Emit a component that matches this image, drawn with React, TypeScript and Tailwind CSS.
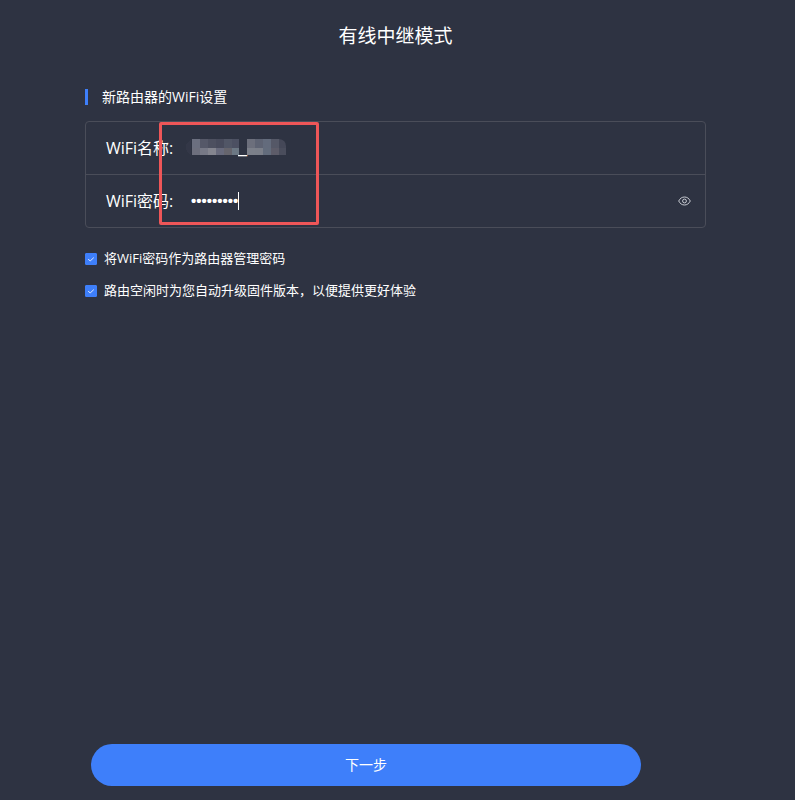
import { useState } from "react";

const CENSOR_TOP = ["#6b6f7f", "#555868", "#4d5060", "#484b5c", "#515666", "#4c5062"];
const CENSOR_BOTTOM = ["#6d6f7d", "#777986", "#84858f", "#686a7c", "#66656d", "#6c7884"];
const CENSOR_TOP_2 = ["#6c6f7c", "#5e6373", "#636b7c", "#555867", "#454858"];
const CENSOR_BOTTOM_2 = ["#7c808a", "#7b7f89", "#636c7c", "#5d5c69", "#4a4d5c"];

function Mosaic() {
  return (
    <svg
      className="pointer-events-none absolute top-[17px] left-0"
      width="106"
      height="18"
      viewBox="0 0 106 18"
      shapeRendering="crispEdges"
      aria-hidden="true"
    >
      <defs>
        <clipPath id="censor-edge">
          <path d="M0 0H94Q101 1 101 7V16H0Z" />
        </clipPath>
      </defs>
      <path d="M6 1Q1 3 1 8Q1 14 6 16Z" fill="#333747" />
      <g clipPath="url(#censor-edge)">
        {CENSOR_TOP.map((c, i) => (
          <rect key={i} x={7 + i * 8} y="0" width={i === 5 ? 7 : 8} height="9" fill={c} />
        ))}
        {CENSOR_BOTTOM.map((c, i) => (
          <rect key={i} x={7 + i * 8} y="9" width={i === 5 ? 7 : 8} height="7" fill={c} />
        ))}
        {CENSOR_TOP_2.map((c, i) => (
          <rect key={i} x={62 + i * 8} y="0" width="8" height="9" fill={c} />
        ))}
        {CENSOR_BOTTOM_2.map((c, i) => (
          <rect key={i} x={62 + i * 8} y="9" width="8" height="7" fill={c} />
        ))}
      </g>
    </svg>
  );
}

function EyeIcon() {
  return (
    <svg width="13" height="10" viewBox="0 0 13 10" fill="none" stroke="#c9ccd3" strokeWidth="1" aria-hidden="true">
      <path d="M0.7 5C2 2.4 4 1 6.5 1S11 2.4 12.3 5C11 7.6 9 9 6.5 9S2 7.6 0.7 5Z" />
      <circle cx="6.5" cy="5" r="1.9" />
    </svg>
  );
}

function Option({ id, label }: { id: string; label: string }) {
  const [checked, setChecked] = useState(true);
  return (
    <div className="flex h-5 items-center gap-[7px]">
      <span className="relative mt-0.5 size-3">
        <input
          id={id}
          type="checkbox"
          checked={checked}
          onChange={(e) => setChecked(e.target.checked)}
          className="peer block size-3 appearance-none rounded-[1px] border border-[#3e7ffa] checked:bg-[#3e7ffa]"
        />
        <svg
          className="pointer-events-none absolute inset-0 hidden peer-checked:block"
          viewBox="0 0 12 12"
          fill="none"
          stroke="#dfe9ff"
          strokeWidth="1"
          aria-hidden="true"
        >
          <path d="M3.2 6L5.2 8L8.8 4.6" />
        </svg>
      </span>
      <label htmlFor={id} className="text-[13px] leading-5">
        {label}
      </label>
    </div>
  );
}

export default function App() {
  const [name, setName] = useState("_");
  const [password, setPassword] = useState("123456789");
  const [visible, setVisible] = useState(false);

  return (
    <main className="flex min-h-screen flex-col bg-[#2e3342] pr-[89px] pb-[14px] pl-[85px] font-['Open_Sans','Noto_Sans_CJK_SC',sans-serif] text-white">
      <h1 className="pt-[22px] text-center text-[19px] leading-7">有线中继模式</h1>

      <h2 className="mt-[37px] flex h-5 items-center text-sm leading-5">
        <span className="mr-[14px] h-4 w-[3px] bg-[#3e7ffa]" />
        新路由器的WiFi设置
      </h2>

      <form id="wifi" className="relative mt-[14px] rounded-[4px] border border-[#4a4d59]" onSubmit={(e) => e.preventDefault()}>
        <div className="flex h-[53px] items-center border-b border-[#4a4d59] pl-5">
          <label htmlFor="wifi-name" className="w-[79px] text-base leading-6 whitespace-nowrap">
            WiFi名称:
          </label>
          <div className="relative flex h-full flex-1 items-center">
            <Mosaic />
            <input
              id="wifi-name"
              type="text"
              value={name}
              onChange={(e) => setName(e.target.value)}
              className="w-full bg-transparent pl-[53px] font-['Liberation_Sans',sans-serif] text-base leading-6 outline-none"
            />
          </div>
        </div>
        <div className="flex h-[52px] items-center pr-[14px] pl-5">
          <label htmlFor="wifi-password" className="w-[79px] text-base leading-6 whitespace-nowrap">
            WiFi密码:
          </label>
          <div className="relative flex h-full flex-1 items-center">
            <input
              id="wifi-password"
              type={visible ? "text" : "password"}
              value={password}
              onChange={(e) => setPassword(e.target.value)}
              className="w-full bg-transparent pl-[6px] font-['Liberation_Sans',sans-serif] text-[15px] leading-6 font-bold outline-none"
            />
            <span className="pointer-events-none absolute top-[17px] left-[53px] h-[18px] w-px bg-white" />
          </div>
          <button type="button" aria-label="显示密码" onClick={() => setVisible(!visible)}>
            <EyeIcon />
          </button>
        </div>
        <div className="pointer-events-none absolute top-0 left-[73px] h-[103px] w-[160px] rounded-[2px] border-[3px] border-[#ee5658]" />
      </form>

      <div className="mt-5 flex flex-col gap-3">
        <Option id="same-password" label="将WiFi密码作为路由器管理密码" />
        <Option id="auto-upgrade" label="路由空闲时为您自动升级固件版本，以便提供更好体验" />
      </div>

      <button
        type="submit"
        form="wifi"
        className="mt-auto ml-[6px] h-[42px] w-full max-w-[550px] rounded-full bg-[#3e7ffa] text-sm leading-5"
      >
        下一步
      </button>
    </main>
  );
}
